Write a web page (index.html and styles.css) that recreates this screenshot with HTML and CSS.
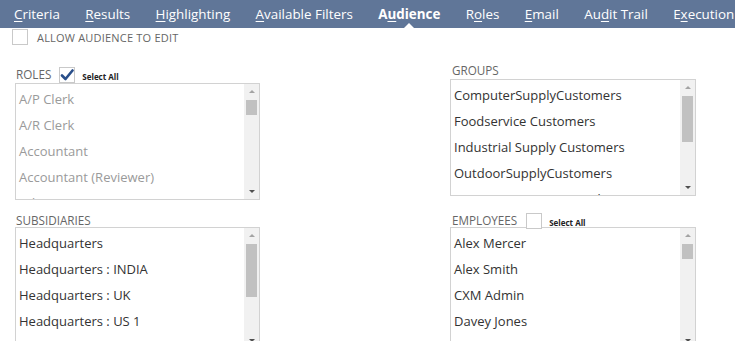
FILE: index.html
```html
<!DOCTYPE html>
<html lang="en">
  <head>
    <meta charset="UTF-8" />
    <meta name="viewport" content="width=device-width, initial-scale=1.0" />
    <title>Saved Search - Audience</title>
    <link rel="stylesheet" href="styles.css">
  </head>
  <body>
    <!-- Pestañas -->
    <div class="tabs">
      <span class="tab"><u>C</u>riteria</span>
      <span class="tab"><u>R</u>esults</span>
      <span class="tab"><u>H</u>ighlighting</span>
      <span class="tab"><u>A</u>vailable Filters</span>
      <span class="tab active">A<u>u</u>dience</span>
      <span class="tab">R<u>o</u>les</span>
      <span class="tab"><u>E</u>mail</span>
      <span class="tab">Au<u>d</u>it Trail</span>
      <span class="tab">E<u>x</u>ecution Log</span>
    </div>

    <div class="allow-row">
      <span class="checkbox"></span>
      <span class="allow-label">ALLOW AUDIENCE TO EDIT</span>
    </div>

    <div class="audience-grid">
      <div class="field roles">
        <div class="field-label">
          ROLES
          <span class="checkbox checked">
            <svg width="14" height="12" viewBox="0 0 14 12"><path d="M2 6.5 L5.5 10 L12.5 1.5" fill="none" stroke="#2a4f8a" stroke-width="2.6" stroke-linecap="round" stroke-linejoin="round"/></svg>
          </span>
          <span class="select-all">Select All</span>
        </div>
        <div class="listbox">
          <div class="list disabled">
            <div class="item">A/P Clerk</div>
            <div class="item">A/R Clerk</div>
            <div class="item">Accountant</div>
            <div class="item">Accountant (Reviewer)</div>
            <div class="item">Administrator</div>
          </div>
          <div class="scrollbar">
            <span class="arrow up"></span>
            <div class="track"><div class="thumb" style="margin-top: 2px; height: 15px"></div></div>
            <span class="arrow down"></span>
          </div>
        </div>
      </div>

      <div class="field groups">
        <div class="field-label">GROUPS</div>
        <div class="listbox">
          <div class="list">
            <div class="item">ComputerSupplyCustomers</div>
            <div class="item">Foodservice Customers</div>
            <div class="item">Industrial Supply Customers</div>
            <div class="item">OutdoorSupplyCustomers</div>
            <div class="item">Support Computer Hardware</div>
          </div>
          <div class="scrollbar">
            <span class="arrow up"></span>
            <div class="track"><div class="thumb" style="margin-top: 2px; height: 46px"></div></div>
            <span class="arrow down"></span>
          </div>
        </div>
      </div>

      <div class="field subsidiaries">
        <div class="field-label">SUBSIDIARIES</div>
        <div class="listbox">
          <div class="list">
            <div class="item">Headquarters</div>
            <div class="item">Headquarters : INDIA</div>
            <div class="item">Headquarters : UK</div>
            <div class="item">Headquarters : US 1</div>
            <div class="item">Headquarters : US 2</div>
          </div>
          <div class="scrollbar">
            <span class="arrow up"></span>
            <div class="track"><div class="thumb" style="margin-top: 2px; height: 53px"></div></div>
            <span class="arrow down"></span>
          </div>
        </div>
      </div>

      <div class="field employees">
        <div class="field-label">
          EMPLOYEES
          <span class="checkbox"></span>
          <span class="select-all">Select All</span>
        </div>
        <div class="listbox">
          <div class="list">
            <div class="item">Alex Mercer</div>
            <div class="item">Alex Smith</div>
            <div class="item">CXM Admin</div>
            <div class="item">Davey Jones</div>
            <div class="item">Emily Clark</div>
          </div>
          <div class="scrollbar">
            <span class="arrow up"></span>
            <div class="track"><div class="thumb" style="margin-top: 2px; height: 15px"></div></div>
            <span class="arrow down"></span>
          </div>
        </div>
      </div>
    </div>
  </body>
</html>
```

FILE: styles.css
```css
/* Estilos generales */
body {
  margin: 0;
  background: #fff;
  font-family: "Open Sans", "Liberation Sans", sans-serif;
  color: #333;
  overflow: hidden;
}

/* Barra de pestañas */
.tabs {
  background: #607698;
  height: 28px;
  display: flex;
  align-items: center;
  padding-left: 14px;
  gap: 25.4px;
  white-space: nowrap;
  overflow: hidden;
}

.tab {
  position: relative;
  color: #fff;
  font-size: 13.4px;
  line-height: 28px;
}

.tab u {
  text-underline-offset: 2px;
}

.tab.active {
  font-weight: bold;
}

.tab.active::after {
  content: "";
  position: absolute;
  left: 50%;
  bottom: 0;
  margin-left: -5px;
  border-left: 5px solid transparent;
  border-right: 5px solid transparent;
  border-bottom: 5px solid #fff;
}

/* Casillas */
.checkbox {
  display: inline-flex;
  align-items: center;
  justify-content: center;
  box-sizing: border-box;
  width: 16px;
  height: 16px;
  border: 1px solid #c9c9c9;
  background: #fff;
  vertical-align: middle;
}

.allow-row {
  display: flex;
  align-items: center;
  padding: 1px 0 0 12px;
  gap: 9px;
}

.allow-label {
  font-size: 11px;
  color: #666;
  letter-spacing: 0.2px;
}

/* Rejilla de audiencia */
.audience-grid {
  display: grid;
  grid-template-columns: 245px 246px;
  column-gap: 190px;
  padding-left: 15px;
  margin-top: 19px;
}

.field-label {
  display: flex;
  align-items: flex-end;
  gap: 7px;
  font-size: 11.7px;
  color: #666;
  padding-left: 1px;
  height: 18px;
}

.field-label .checkbox {
  margin-left: 1px;
  margin-bottom: -1px;
}

.employees .field-label .checkbox {
  margin-left: 2px;
}

.select-all {
  font-size: 8px;
  font-weight: bold;
  color: #222;
}

.groups .field-label {
  height: 14px;
  padding-left: 2px;
}

.subsidiaries {
  margin-top: 13px;
}

.employees {
  margin-top: 13px;
}

.subsidiaries .field-label,
.employees .field-label {
  height: 15px;
}

.employees .field-label {
  padding-left: 2px;
}

/* Listas */
.listbox {
  display: flex;
  border: 1px solid #d2d2d2;
  box-sizing: border-box;
  height: 117px;
  margin-top: 1px;
}

.subsidiaries .listbox,
.employees .listbox {
  height: 122px;
  margin-top: -1px;
}

.list {
  flex: 1;
  overflow: hidden;
  padding: 2px 0 0 3px;
}

.item {
  font-size: 13px;
  line-height: 26px;
  white-space: nowrap;
}

.list.disabled .item {
  color: #9a9a9a;
}

/* Barra de desplazamiento */
.scrollbar {
  width: 15px;
  background: #f1f1f1;
  display: flex;
  flex-direction: column;
  align-items: center;
}

.arrow {
  width: 0;
  height: 0;
  border-left: 3px solid transparent;
  border-right: 3px solid transparent;
  margin: 6px 0 5px;
}

.arrow.up {
  border-bottom: 3px solid #a3a3a3;
}

.arrow.down {
  border-top: 3px solid #505050;
  margin: 5px 0 6px;
}

.track {
  flex: 1;
  width: 100%;
  display: flex;
  flex-direction: column;
  align-items: center;
}

.thumb {
  width: 11px;
  background: #c1c1c1;
}
```
